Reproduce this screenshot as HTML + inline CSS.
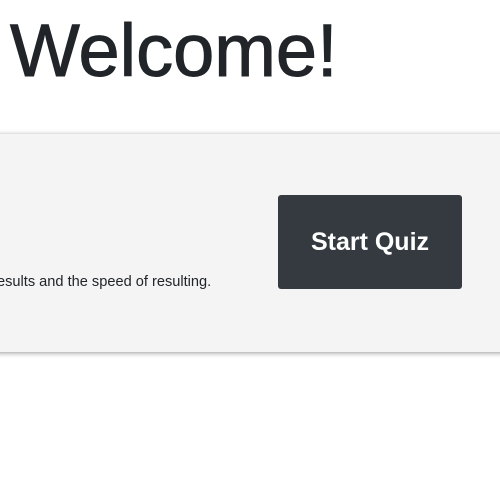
<!DOCTYPE html>
<html><head><style>
html,body{margin:0;padding:0;background:#fff;width:500px;height:500px;overflow:hidden;position:relative;font-family:"Liberation Sans",sans-serif;}
h1{position:absolute;left:10px;top:1px;margin:0;font-size:74px;font-weight:normal;color:#212529;line-height:100px;letter-spacing:0;-webkit-text-stroke:1px #212529;}
.panel{position:absolute;left:-10px;top:134px;width:530px;height:218px;background:#f4f4f4;box-shadow:0 1px 5px rgba(0,0,0,.4);}
.txt{position:absolute;left:-3px;top:274px;font-size:14.6px;color:#212529;white-space:nowrap;}
.btn{position:absolute;left:278px;top:195px;width:184px;height:94px;background:#343a40;border-radius:3px;color:#fff;font-size:25px;font-weight:bold;display:flex;align-items:center;justify-content:center;}
</style></head><body>
<h1>Welcome!</h1>
<div class="panel"></div>
<div class="txt">esults and the speed of resulting.</div>
<div class="btn">Start Quiz</div>
</body></html>
